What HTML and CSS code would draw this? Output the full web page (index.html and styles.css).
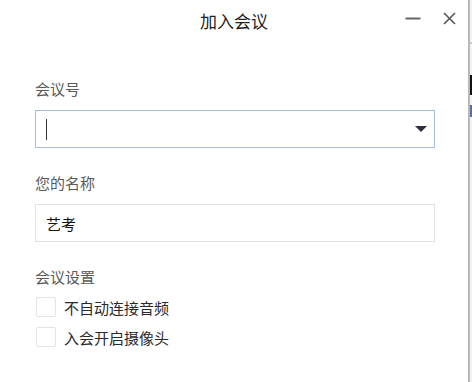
FILE: index.html
```html
<!DOCTYPE html>
<html>
<head>
<meta charset="utf-8">
<title>加入会议</title>
<link rel="stylesheet" href="styles.css">
</head>
<body>
<div class="dialog">
  <div class="titleBar">
    <span class="title">加入会议</span>
    <a class="winBtn minBtn"><svg width="16" height="16" viewBox="0 0 16 16"><path d="M0.5 8.5h15" stroke="#666" stroke-width="2"/></svg></a>
    <a class="winBtn closeBtn"><svg width="13" height="13" viewBox="0 0 13 13"><path d="M1 1L12 12M12 1L1 12" stroke="#555" stroke-width="1.6"/></svg></a>
  </div>
  <form class="joinForm">
    <div class="field">
      <label class="fieldLabel">会议号</label>
      <div class="inputBox inputFocus">
        <span class="caret"></span>
        <span class="dropArrow"></span>
      </div>
    </div>
    <div class="field">
      <label class="fieldLabel">您的名称</label>
      <div class="inputBox"><span class="inputText">艺考</span></div>
    </div>
    <div class="field settings">
      <label class="fieldLabel">会议设置</label>
      <div class="checkRow"><span class="checkBox"></span><span class="checkText">不自动连接音频</span></div>
      <div class="checkRow"><span class="checkBox"></span><span class="checkText">入会开启摄像头</span></div>
    </div>
  </form>
</div>
<div class="backWin">
  <span class="bwLine"></span>
  <span class="bwBlock"></span>
  <span class="bwText"></span>
</div>
</body>
</html>
```

FILE: styles.css
```css
body {
  margin: 0;
  display: flex;
  height: 382px;
  overflow: hidden;
  font-family: "Noto Sans CJK SC", "Noto Sans", sans-serif;
  background-color: white;
}
.dialog {
  width: 468px;
  height: 382px;
  background-color: white;
  flex: none;
}
.titleBar {
  position: relative;
  height: 42px;
  line-height: 42px;
  text-align: center;
}
.title {
  font-size: 17px;
  color: #222;
}
.winBtn {
  position: absolute;
  display: block;
  line-height: 0;
}
.minBtn {
  left: 405px;
  top: 10px;
}
.closeBtn {
  left: 443px;
  top: 12px;
}
.joinForm {
  padding: 0 33px 0 35px;
}
.field {
  margin-top: 37px;
}
.field + .field {
  margin-top: 25px;
}
.fieldLabel {
  display: block;
  font-size: 15px;
  line-height: 20px;
  color: #5a5a5a;
  margin-bottom: 11px;
}
.inputBox {
  position: relative;
  box-sizing: border-box;
  height: 38px;
  border: 1px solid #e1e1e1;
  display: flex;
  align-items: center;
  padding-left: 10px;
}
.inputFocus {
  border-color: #a3bde0;
}
.caret {
  width: 1px;
  height: 21px;
  background-color: #333;
}
.dropArrow {
  position: absolute;
  right: 7px;
  top: 15px;
  border-left: 6px solid transparent;
  border-right: 6px solid transparent;
  border-top: 6px solid #2e2e42;
}
.inputText {
  font-size: 15px;
  color: #111;
}
.settings .fieldLabel {
  margin-bottom: 5px;
}
.checkRow {
  display: flex;
  align-items: center;
  height: 30px;
}
.checkBox {
  box-sizing: border-box;
  width: 20px;
  height: 20px;
  margin-left: 1px;
  border: 1px solid #e3e3e3;
  border-radius: 2px;
}
.checkText {
  margin-left: 8px;
  font-size: 15px;
  color: #2a2a2a;
}
.backWin {
  position: relative;
  flex: 1;
  border-left: 2px solid #b8b8b8;
  background-color: #f4f4f4;
}
.bwLine {
  position: absolute;
  left: 0;
  right: 0;
  top: 42px;
  height: 2px;
  background-color: #ccc;
}
.bwBlock {
  position: absolute;
  left: 0;
  top: 75px;
  width: 2px;
  height: 20px;
  background-color: #111;
}
.bwText {
  position: absolute;
  left: 0;
  top: 105px;
  width: 2px;
  height: 12px;
  background-color: #5b6f9a;
}
```
